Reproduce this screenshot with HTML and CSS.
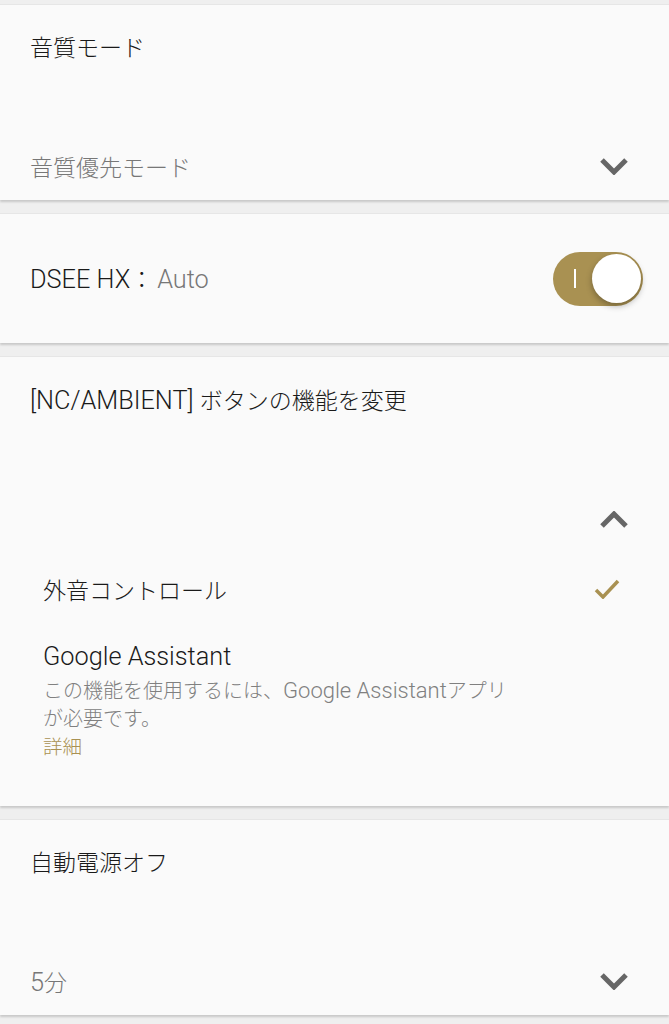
FILE: index.html
```html
<!DOCTYPE html>
<html>
<head>
    <title>設定</title>
    <meta name="viewport" content="width=device-width, initial-scale=1">
    <link rel="stylesheet" href="styles.css">
</head>
<body>

    <div class="settings">

        <section class="card select-card">
            <div class="card-title">音質モード</div>
            <div class="select-row">
                <span class="select-value">音質優先モード</span>
                <svg class="chevron" width="28" height="18" viewBox="0 0 28 18">
                    <polyline points="2,3 14,15 26,3"></polyline>
                </svg>
            </div>
        </section>

        <section class="card toggle-card">
            <div class="card-title"><span class="en">DSEE HX</span>：<span class="en toggle-value">Auto</span></div>
            <div class="switch">
                <span class="switch-mark"></span>
                <span class="switch-knob"></span>
            </div>
        </section>

        <section class="card expand-card">
            <div class="card-title"><span class="en">[NC/AMBIENT] </span>ボタンの機能を変更</div>
            <div class="expand-toggle">
                <svg class="chevron" width="28" height="18" viewBox="0 0 28 18">
                    <polyline points="2,15 14,3 26,15"></polyline>
                </svg>
            </div>
            <div class="option option-selected">
                <span class="option-label">外音コントロール</span>
                <svg class="check" width="26" height="20" viewBox="0 0 26 20">
                    <polyline points="2,11 9,18 24,2"></polyline>
                </svg>
            </div>
            <div class="option option-assistant">
                <div class="option-label"><span class="en">Google Assistant</span></div>
                <p class="option-note">この機能を使用するには、<span class="en">Google Assistant</span>アプリ<br>が必要です。</p>
                <a class="option-link">詳細</a>
            </div>
        </section>

        <section class="card select-card">
            <div class="card-title">自動電源オフ</div>
            <div class="select-row">
                <span class="select-value"><span class="en">5</span>分</span>
                <svg class="chevron" width="28" height="18" viewBox="0 0 28 18">
                    <polyline points="2,3 14,15 26,3"></polyline>
                </svg>
            </div>
        </section>

    </div>

</body>
</html>
```

FILE: styles.css
```css
html, body {
    margin: 0;
}

body {
    font-family: "Noto Sans CJK JP", Roboto, sans-serif;
    font-weight: 300;
    background: #efefef;
    color: #1a1a1a;
    height: 1024px;
    overflow: hidden;
}

/* latin runs are set a little larger than the kana */
.en {
    font-family: Roboto, sans-serif;
    font-weight: 300;
    font-size: 1.1em;
}

.settings {
    display: flex;
    flex-direction: column;
    gap: 13px;
    padding-top: 4px;
}

.card {
    background: #fafafa;
    box-sizing: border-box;
    border-top: 1px solid #e6e6e6;
    box-shadow: 0 2px 2px rgba(0, 0, 0, 0.16);
}

.card-title {
    font-size: 23px;
    line-height: 34px;
    color: #1a1a1a;
}

.chevron polyline {
    fill: none;
    stroke: #666;
    stroke-width: 5;
}

/* dropdown cards */
.select-card {
    height: 196px;
    padding: 24px 41px 17px 30px;
    display: flex;
    flex-direction: column;
    justify-content: space-between;
}

.select-row {
    display: flex;
    align-items: center;
    justify-content: space-between;
    height: 34px;
}

.select-value {
    font-size: 23px;
    color: #777;
}

/* switch card */
.toggle-card {
    height: 130px;
    padding: 0 26px 0 30px;
    display: flex;
    align-items: center;
    justify-content: space-between;
}

.toggle-value {
    color: #777;
    margin-left: 4px;
}

.switch {
    width: 90px;
    height: 54px;
    border-radius: 27px;
    background: #a99152;
    box-sizing: border-box;
    padding: 0 2px 0 21px;
    display: flex;
    align-items: center;
    justify-content: space-between;
}

.switch-mark {
    width: 2px;
    height: 19px;
    background: #fff;
}

.switch-knob {
    width: 49px;
    height: 49px;
    border-radius: 50%;
    background: #fff;
    box-shadow: 0 3px 6px rgba(0, 0, 0, 0.3);
}

/* expanded card */
.expand-card {
    height: 450px;
    padding: 25px 41px 0 30px;
}

.expand-toggle {
    display: flex;
    justify-content: flex-end;
    margin-top: 93px;
}

.option {
    padding-left: 13px;
}

.option-selected {
    display: flex;
    align-items: center;
    justify-content: space-between;
    margin-top: 43px;
    padding-right: 8px;
}

.option-label {
    font-size: 23px;
    line-height: 34px;
    color: #1a1a1a;
}

.check polyline {
    fill: none;
    stroke: #a99152;
    stroke-width: 3.5;
}

.option-assistant {
    margin-top: 32px;
}

.option-note {
    margin: 2px 0 0;
    font-size: 20px;
    line-height: 27px;
    color: #808080;
}

.option-link {
    display: block;
    font-size: 19.5px;
    line-height: 30px;
    color: #a99152;
}
```
